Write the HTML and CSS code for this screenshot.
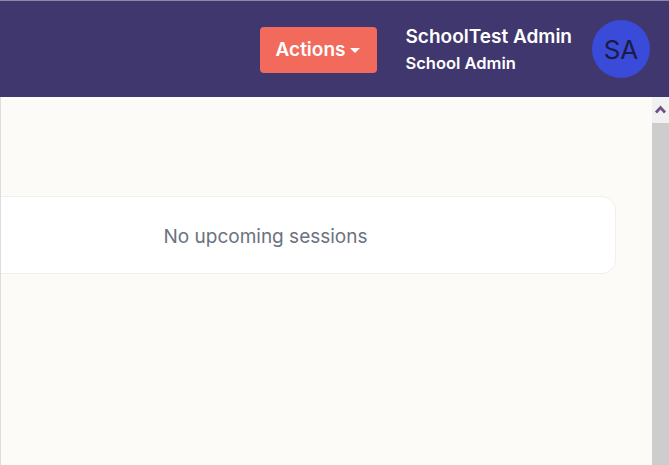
FILE: index.html
```html
<!DOCTYPE html>
<html>
<head>
<meta charset="utf-8">
<link rel="stylesheet" href="styles.css">
</head>
<body>
<header class="topbar">
  <button class="actions">Actions <span class="caret"></span></button>
  <div class="user">
    <div class="user-name">SchoolTest Admin</div>
    <div class="user-role">School Admin</div>
  </div>
  <div class="avatar">SA</div>
</header>
<div class="body-row">
  <main class="content">
    <section class="card">No upcoming sessions</section>
  </main>
  <div class="scrollbar" aria-hidden="true">
    <div class="sb-up">
      <svg width="17" height="26" viewBox="0 0 17 26"><path d="M4 15.5 L8.5 10.5 L13 15.5" fill="none" stroke="#6e5286" stroke-width="2.8" stroke-linejoin="miter"/></svg>
    </div>
    <div class="sb-thumb"></div>
  </div>
</div>
</body>
</html>
```
FILE: styles.css
```css
html, body {
  margin: 0;
  padding: 0;
  height: 100%;
  overflow: hidden;
}
body {
  font-family: "Inter", "Liberation Sans", sans-serif;
  background: #fcfbf7;
  display: flex;
  flex-direction: column;
}
.topbar {
  height: 96px;
  flex: none;
  background: #41376f;
  border-top: 1px solid #8c86a8;
  display: flex;
  align-items: center;
  justify-content: flex-end;
  padding-right: 19px;
}
.actions {
  height: 46px;
  width: 117px;
  border: none;
  border-radius: 4px;
  background: #f26a5c;
  color: #fff;
  font-family: inherit;
  font-size: 19px;
  font-weight: 600;
  display: flex;
  align-items: center;
  justify-content: center;
  gap: 5px;
  padding: 0;
  margin-right: 29px;
  margin-top: 1px;
}
.caret {
  width: 0;
  height: 0;
  border-left: 5px solid transparent;
  border-right: 5px solid transparent;
  border-top: 5px solid #fff;
  margin-top: 1px;
}
.user {
  color: #fff;
  display: flex;
  flex-direction: column;
  gap: 6px;
  margin-right: 20px;
}
.user-name {
  font-size: 19px;
  font-weight: 600;
  line-height: 22px;
}
.user-role {
  font-size: 16.5px;
  font-weight: 600;
  line-height: 19px;
}
.avatar {
  width: 58px;
  height: 58px;
  border-radius: 50%;
  background: #394bd8;
  color: #1b1b44;
  font-size: 26px;
  display: flex;
  align-items: center;
  justify-content: center;
}
.body-row {
  flex: 1;
  min-height: 0;
  display: flex;
}
.content {
  flex: 1;
  min-width: 0;
  overflow: hidden;
  border-left: 1px solid #dcdce2;
  padding-top: 99px;
}
.card {
  margin-left: -86px;
  margin-right: 36px;
  height: 78px;
  box-sizing: border-box;
  background: #fff;
  border: 1px solid #efefef;
  border-radius: 14px;
  display: flex;
  align-items: center;
  justify-content: center;
  color: #6b7280;
  font-size: 19px;
  padding-top: 2px;
}
.scrollbar {
  width: 17px;
  flex: none;
  display: flex;
  flex-direction: column;
  background: #f1f1f1;
}
.sb-up {
  height: 26px;
  flex: none;
  background: #f1f1f1;
}
.sb-up svg {
  display: block;
}
.sb-thumb {
  flex: 1;
  background: #cdcdcd;
}
```
